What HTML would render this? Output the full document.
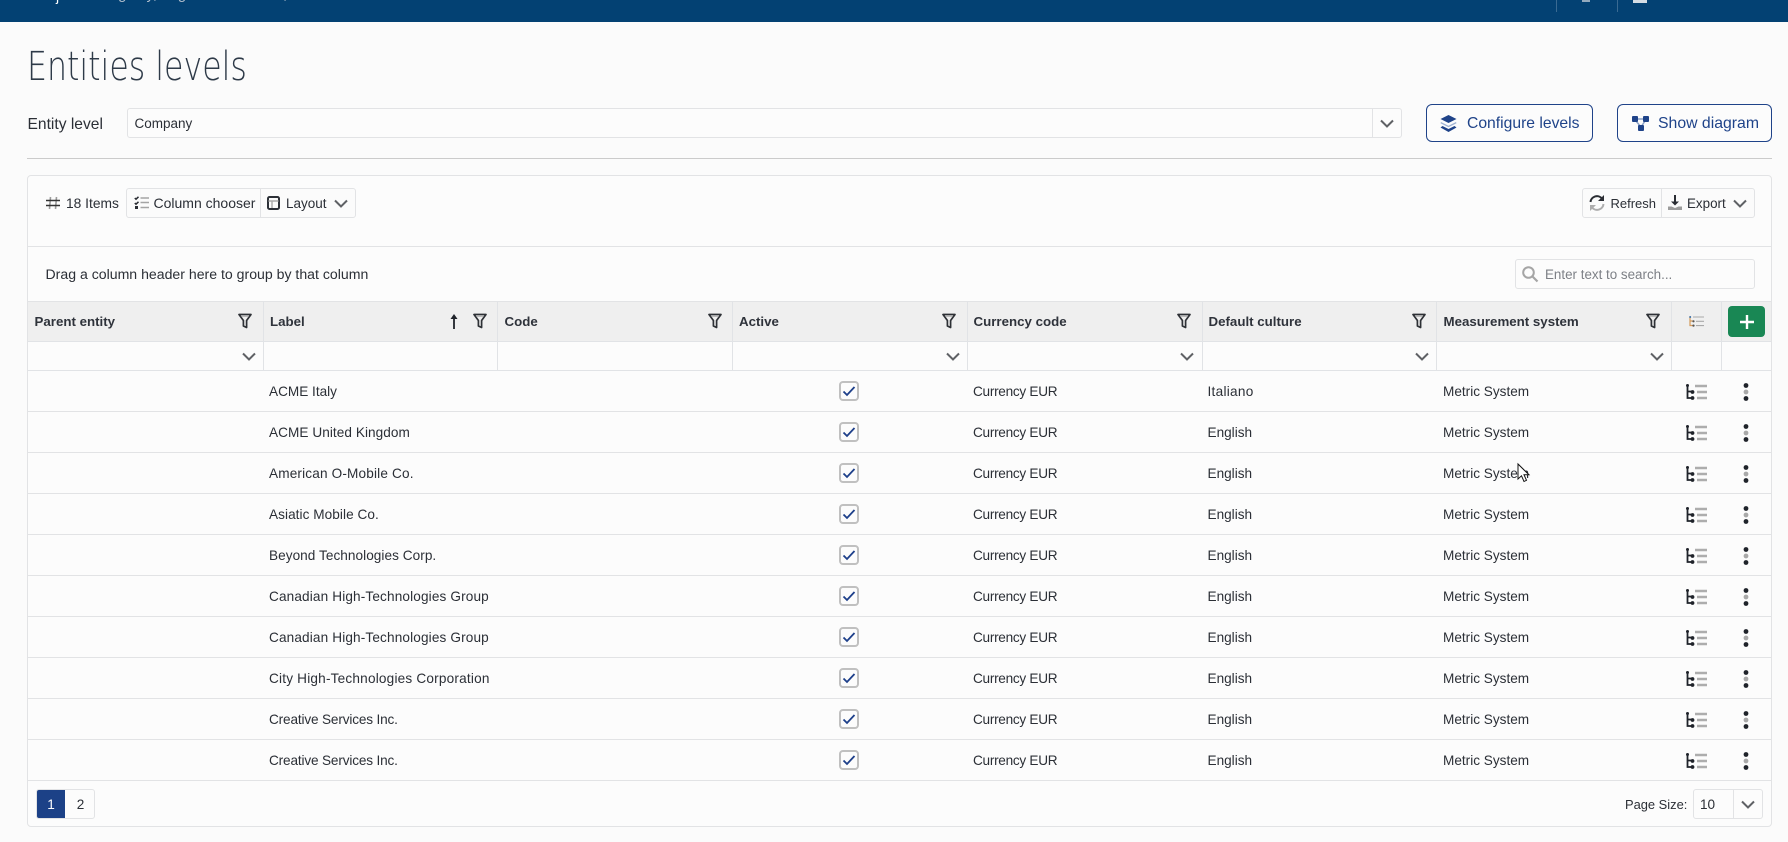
<!DOCTYPE html>
<html lang="en"><head><meta charset="utf-8"><title>Entities levels</title>
<style>
*{box-sizing:border-box}
html,body{margin:0;padding:0;width:1788px;height:842px;overflow:hidden;background:#fbfbfb;font-family:"Liberation Sans",sans-serif;font-size:13.6px;color:#2b2f36}
.a{position:absolute;white-space:nowrap}
svg{display:block;overflow:visible}
.t{line-height:20px;height:20px}
.b{border:1px solid #e2e3e5;border-radius:3px}
.v{position:absolute;width:1px;background:#e2e3e5}
.hd{font-weight:bold;color:#2f333b;font-size:13.3px;line-height:20px;height:20px;top:312px}
.col{position:absolute;top:301px;width:1px;height:70px;background:#e1e3e6}
.row{position:absolute;left:28px;width:1743px;height:41px;border-bottom:1px solid #e2e3e5}
.row .a{line-height:20px;height:20px;top:11px}
.c1{left:241px}.c2{left:945px;letter-spacing:-.28px}.c3{left:1179.5px}.c4{left:1415px}
.row .cb{left:811px;top:10px;width:20px;height:20px;border:2px solid #c0c0c0;border-radius:4px}
.row .tr{left:1658px;top:11px}
.row .dt{left:1715px;top:11px}
</style></head><body>
<svg width="0" height="0" style="position:absolute">
<defs>
<symbol id="fil" viewBox="0 0 14 16"><path d="M1 1.5h12L8.6 7.5V14.5L5.4 13V7.5Z" fill="none" stroke="#2e3136" stroke-width="1.7" stroke-linejoin="round"/><path d="M3.5 3.5h7" stroke="#bbb" stroke-width="1"/></symbol>
<symbol id="chev" viewBox="0 0 14 9"><path d="M1 1.5 7 7.5 13 1.5" fill="none" stroke="#5f6165" stroke-width="2"/></symbol>
<symbol id="tree" viewBox="0 0 21 16"><path d="M1.5 1v13h5M1.5 7.5h5" fill="none" stroke="#1f232a" stroke-width="1.8"/><circle cx="1.5" cy="1.5" r="1.5" fill="#1f232a"/><circle cx="6.5" cy="8" r="1.9" fill="#1f232a"/><circle cx="6.5" cy="14" r="1.9" fill="#1f232a"/><path d="M9 2h12M11 8h10M11 14h10" stroke="#adadad" stroke-width="2.6"/></symbol>
<symbol id="dots" viewBox="0 0 6 18"><circle cx="3" cy="2.5" r="2.4" fill="#1f232a"/><circle cx="3" cy="9" r="2.4" fill="#a9a9a9"/><circle cx="3" cy="15.5" r="2.4" fill="#1f232a"/></symbol>
<symbol id="chk" viewBox="0 0 16 16"><path d="M2.5 8.5 6 12 13.5 4" fill="none" stroke="#1d3f8a" stroke-width="1.8"/></symbol>
</defs></svg>

<!-- top bar -->
<div class="a" style="left:0;top:0;width:1788px;height:22px;background:#034173;overflow:hidden">
  <div class="a" style="left:56px;top:-12px;color:#fff;font-size:14px;line-height:16px">j</div>
  <div class="a" style="left:99px;top:-13px;color:#aebccb;font-size:15px;line-height:16px">Registry, Organization</div>
  <div class="a" style="left:283px;top:-13px;color:#aebccb;font-size:15px;line-height:16px">,</div>
  <div class="a" style="left:1556px;top:0;width:1px;height:12px;background:#3a6a92"></div>
  <div class="a" style="left:1617px;top:0;width:1px;height:12px;background:#3a6a92"></div>
  <div class="a" style="left:1582px;top:0;width:8px;height:2px;background:#93a9bd"></div>
  <div class="a" style="left:1633px;top:0;width:14px;height:3px;background:#d5dde5"></div>
</div>

<!-- title -->
<div class="a" style="left:27px;top:43px;font-family:'DejaVu Sans','Liberation Sans',sans-serif;font-weight:200;font-size:40px;line-height:48px;color:#2e3a48;transform-origin:0 0;transform:scaleX(.79)">Entities levels</div>

<!-- entity level -->
<div class="a t" style="left:27.5px;top:115px;font-size:15.6px">Entity level</div>
<div class="a b" style="left:127px;top:108px;width:1275px;height:30px;background:#fcfcfc"></div>
<div class="a t" style="left:134.5px;top:114px;font-size:13.5px">Company</div>
<div class="v" style="left:1372px;top:109px;height:28px"></div>
<svg class="a" style="left:1380px;top:119px" width="14" height="9"><use href="#chev"/></svg>

<!-- top buttons -->
<div class="a" style="left:1426px;top:104px;width:167px;height:38px;border:1.5px solid #1f4389;border-radius:6px;background:#fcfcfc"></div>
<svg class="a" style="left:1440px;top:115px" width="17" height="17" viewBox="0 0 17 17"><path d="M8.5 0 16.5 4 8.5 8 .5 4Z" fill="#1f4389"/><path d="M1 7 8.5 10.7 16 7 16.5 8.3 8.5 12.3 .5 8.3Z" fill="#9fb2d3"/><path d="M2.5 11 8.5 14 14.5 11 16.5 12.5 8.5 17 .5 12.5Z" fill="#1f4389"/></svg>
<div class="a t" style="left:1467px;top:114px;font-size:15.7px;color:#1f4389">Configure levels</div>
<div class="a" style="left:1617px;top:104px;width:155px;height:38px;border:1.5px solid #1f4389;border-radius:6px;background:#fcfcfc"></div>
<svg class="a" style="left:1632px;top:116px" width="17" height="15" viewBox="0 0 17 15"><path d="M3 3h11M4 5l5 6M13 5l-4 6" stroke="#8aa0c6" stroke-width="1.5" fill="none"/><rect x="0" y="0" width="6" height="6" rx="1" fill="#1f4389"/><rect x="11" y="0" width="6" height="6" rx="1" fill="#1f4389"/><rect x="6" y="9" width="6" height="6" rx="1" fill="#1f4389"/></svg>
<div class="a t" style="left:1658px;top:114px;font-size:15.8px;color:#1f4389">Show diagram</div>

<div class="a" style="left:27px;top:158px;width:1745px;height:1px;background:#cbcbcb"></div>

<!-- card -->
<div class="a" style="left:27px;top:175px;width:1745px;height:652px;border:1px solid #e2e3e5;border-radius:4px;background:#fcfcfc"></div>

<!-- toolbar -->
<svg class="a" style="left:46px;top:196px" width="14" height="14" viewBox="0 0 14 14"><path d="M4.5 1 3.5 13M10.5 1 9.5 13" stroke="#9a9a9a" stroke-width="1.6"/><path d="M0 4.5h14M0 9.5h14" stroke="#333" stroke-width="1.6"/></svg>
<div class="a t" style="left:66px;top:194px;font-size:13.8px">18 Items</div>
<div class="a b" style="left:126px;top:188px;width:230px;height:30px;background:#fbfbfb"></div>
<div class="v" style="left:260px;top:189px;height:28px"></div>
<svg class="a" style="left:134px;top:196px" width="15" height="13" viewBox="0 0 15 13"><path d="M.8 2 2 3.2 4.5.8M.8 7 2 8.2 4.5 5.8" fill="none" stroke="#2a2d33" stroke-width="1.5"/><rect x="1" y="10" width="3" height="3" fill="#2a2d33"/><path d="M6.5 2h8.5M6.5 6.5h8.5M6.5 11.5h8.5" stroke="#a4a4a4" stroke-width="1.5"/></svg>
<div class="a t" style="left:153.5px;top:193px;font-size:14px">Column chooser</div>
<svg class="a" style="left:267px;top:196px" width="13" height="14" viewBox="0 0 13 14"><rect x="1" y="1" width="11" height="12" rx="1.5" fill="none" stroke="#2d3138" stroke-width="2"/><path d="M1.5 5h10M5 5v7" stroke="#a9a9a9" stroke-width="1.4"/></svg>
<div class="a t" style="left:286px;top:194px;font-size:13.5px">Layout</div>
<svg class="a" style="left:334px;top:199px" width="14" height="9"><use href="#chev"/></svg>

<div class="a b" style="left:1582px;top:188px;width:173px;height:30px;background:#fbfbfb"></div>
<div class="v" style="left:1661px;top:189px;height:28px"></div>
<svg class="a" style="left:1589px;top:195px" width="16" height="16" viewBox="0 0 16 16"><path d="M1.5 7A6.5 6.5 0 0 1 13 3.5" fill="none" stroke="#2a2d33" stroke-width="2"/><path d="M15 0V6H9Z" fill="#2a2d33"/><path d="M14.5 9A6.5 6.5 0 0 1 3 12.5" fill="none" stroke="#adadad" stroke-width="2"/><path d="M1 16V10H7Z" fill="#adadad"/></svg>
<div class="a t" style="left:1610.5px;top:194px;font-size:13px">Refresh</div>
<svg class="a" style="left:1668px;top:195px" width="14" height="15" viewBox="0 0 14 15"><path d="M7 0V8" stroke="#2a2d33" stroke-width="2"/><path d="M3 6.5H11L7 10.5Z" fill="#2a2d33"/><path d="M0 15V11.5H3.5L7 13 10.5 11.5H14V15Z" fill="#9c9c9c"/></svg>
<div class="a t" style="left:1687px;top:194px;font-size:13.4px">Export</div>
<svg class="a" style="left:1733px;top:199px" width="14" height="9"><use href="#chev"/></svg>

<div class="a" style="left:28px;top:246px;width:1743px;height:1px;background:#e2e3e5"></div>
<div class="a t" style="left:45.5px;top:264px;font-size:14.1px">Drag a column header here to group by that column</div>
<div class="a b" style="left:1515px;top:259px;width:240px;height:30px;background:#fcfcfc"></div>
<svg class="a" style="left:1522px;top:266px" width="16" height="16" viewBox="0 0 16 16"><circle cx="6.5" cy="6.5" r="5.3" fill="none" stroke="#a5a5a5" stroke-width="2"/><path d="M10.5 10.5 15.5 15.5" stroke="#a5a5a5" stroke-width="2.2"/></svg>
<div class="a t" style="left:1545px;top:265px;font-size:13.4px;color:#7d8086">Enter text to search...</div>

<!-- header -->
<div class="a" style="left:28px;top:301px;width:1743px;height:41px;background:#efefef;border-top:1px solid #e2e3e5;border-bottom:1px solid #e1e3e6"></div>
<div class="a" style="left:28px;top:370px;width:1743px;height:1px;background:#e1e3e6"></div>
<div class="col" style="left:263px"></div><div class="col" style="left:497px"></div><div class="col" style="left:732px"></div><div class="col" style="left:967px"></div><div class="col" style="left:1202px"></div><div class="col" style="left:1436px"></div><div class="col" style="left:1671px"></div><div class="col" style="left:1721px"></div>

<div class="a hd" style="left:34.5px">Parent entity</div>
<div class="a hd" style="left:270px">Label</div>
<div class="a hd" style="left:504.5px">Code</div>
<div class="a hd" style="left:739px">Active</div>
<div class="a hd" style="left:973.5px">Currency code</div>
<div class="a hd" style="left:1208.5px">Default culture</div>
<div class="a hd" style="left:1443.5px">Measurement system</div>

<svg class="a" style="left:238px;top:313px" width="14" height="16"><use href="#fil"/></svg>
<svg class="a" style="left:473px;top:313px" width="14" height="16"><use href="#fil"/></svg>
<svg class="a" style="left:708px;top:313px" width="14" height="16"><use href="#fil"/></svg>
<svg class="a" style="left:942px;top:313px" width="14" height="16"><use href="#fil"/></svg>
<svg class="a" style="left:1177px;top:313px" width="14" height="16"><use href="#fil"/></svg>
<svg class="a" style="left:1412px;top:313px" width="14" height="16"><use href="#fil"/></svg>
<svg class="a" style="left:1646px;top:313px" width="14" height="16"><use href="#fil"/></svg>
<svg class="a" style="left:450px;top:314px" width="8" height="15" viewBox="0 0 8 15"><path d="M4 2V15" stroke="#1f232a" stroke-width="1.8"/><path d="M.5 5 4 0 7.5 5Z" fill="#1f232a"/></svg>

<svg class="a" style="left:1689px;top:316px" width="15" height="11" viewBox="0 0 15 11"><path d="M1 .5v9h4M1 5h4" fill="none" stroke="#d49a5a" stroke-width="1.2"/><circle cx="1.2" cy="1" r="1" fill="#3b6ea5"/><circle cx="4.5" cy="5.3" r="1.1" fill="#555"/><circle cx="4.5" cy="9.6" r="1.1" fill="#555"/><path d="M4 1h11M7 5.3h8M7 9.6h8" stroke="#a9a9a9" stroke-width="1.1"/></svg>
<div class="a" style="left:1728px;top:306px;width:37px;height:31px;background:#198754;border-radius:4px"></div>
<svg class="a" style="left:1739.5px;top:314.5px" width="14" height="14" viewBox="0 0 14 14"><path d="M7 0V14M0 7H14" stroke="#fff" stroke-width="2.4"/></svg>

<svg class="a" style="left:242px;top:352px" width="14" height="9"><use href="#chev"/></svg>
<svg class="a" style="left:946px;top:352px" width="14" height="9"><use href="#chev"/></svg>
<svg class="a" style="left:1180px;top:352px" width="14" height="9"><use href="#chev"/></svg>
<svg class="a" style="left:1415px;top:352px" width="14" height="9"><use href="#chev"/></svg>
<svg class="a" style="left:1650px;top:352px" width="14" height="9"><use href="#chev"/></svg>

<!-- rows -->
<div class="row" style="top:371px"><div class="a c1">ACME Italy</div><div class="a cb"><svg width="16" height="16"><use href="#chk"/></svg></div><div class="a c2">Currency EUR</div><div class="a c3" style="letter-spacing:.28px">Italiano</div><div class="a c4">Metric System</div><svg class="a tr" width="21" height="16"><use href="#tree"/></svg><svg class="a dt" width="6" height="18"><use href="#dots"/></svg></div>
<div class="row" style="top:412px"><div class="a c1" style="letter-spacing:.06px">ACME United Kingdom</div><div class="a cb"><svg width="16" height="16"><use href="#chk"/></svg></div><div class="a c2">Currency EUR</div><div class="a c3">English</div><div class="a c4">Metric System</div><svg class="a tr" width="21" height="16"><use href="#tree"/></svg><svg class="a dt" width="6" height="18"><use href="#dots"/></svg></div>
<div class="row" style="top:453px"><div class="a c1" style="letter-spacing:.16px">American O-Mobile Co.</div><div class="a cb"><svg width="16" height="16"><use href="#chk"/></svg></div><div class="a c2">Currency EUR</div><div class="a c3">English</div><div class="a c4">Metric System</div><svg class="a tr" width="21" height="16"><use href="#tree"/></svg><svg class="a dt" width="6" height="18"><use href="#dots"/></svg></div>
<div class="row" style="top:494px"><div class="a c1" style="letter-spacing:.06px">Asiatic Mobile Co.</div><div class="a cb"><svg width="16" height="16"><use href="#chk"/></svg></div><div class="a c2">Currency EUR</div><div class="a c3">English</div><div class="a c4">Metric System</div><svg class="a tr" width="21" height="16"><use href="#tree"/></svg><svg class="a dt" width="6" height="18"><use href="#dots"/></svg></div>
<div class="row" style="top:535px"><div class="a c1" style="letter-spacing:.05px">Beyond Technologies Corp.</div><div class="a cb"><svg width="16" height="16"><use href="#chk"/></svg></div><div class="a c2">Currency EUR</div><div class="a c3">English</div><div class="a c4">Metric System</div><svg class="a tr" width="21" height="16"><use href="#tree"/></svg><svg class="a dt" width="6" height="18"><use href="#dots"/></svg></div>
<div class="row" style="top:576px"><div class="a c1" style="letter-spacing:.14px">Canadian High-Technologies Group</div><div class="a cb"><svg width="16" height="16"><use href="#chk"/></svg></div><div class="a c2">Currency EUR</div><div class="a c3">English</div><div class="a c4">Metric System</div><svg class="a tr" width="21" height="16"><use href="#tree"/></svg><svg class="a dt" width="6" height="18"><use href="#dots"/></svg></div>
<div class="row" style="top:617px"><div class="a c1" style="letter-spacing:.14px">Canadian High-Technologies Group</div><div class="a cb"><svg width="16" height="16"><use href="#chk"/></svg></div><div class="a c2">Currency EUR</div><div class="a c3">English</div><div class="a c4">Metric System</div><svg class="a tr" width="21" height="16"><use href="#tree"/></svg><svg class="a dt" width="6" height="18"><use href="#dots"/></svg></div>
<div class="row" style="top:658px"><div class="a c1" style="letter-spacing:.2px">City High-Technologies Corporation</div><div class="a cb"><svg width="16" height="16"><use href="#chk"/></svg></div><div class="a c2">Currency EUR</div><div class="a c3">English</div><div class="a c4">Metric System</div><svg class="a tr" width="21" height="16"><use href="#tree"/></svg><svg class="a dt" width="6" height="18"><use href="#dots"/></svg></div>
<div class="row" style="top:699px"><div class="a c1" style="letter-spacing:-.155px">Creative Services Inc.</div><div class="a cb"><svg width="16" height="16"><use href="#chk"/></svg></div><div class="a c2">Currency EUR</div><div class="a c3">English</div><div class="a c4">Metric System</div><svg class="a tr" width="21" height="16"><use href="#tree"/></svg><svg class="a dt" width="6" height="18"><use href="#dots"/></svg></div>
<div class="row" style="top:740px"><div class="a c1" style="letter-spacing:-.155px">Creative Services Inc.</div><div class="a cb"><svg width="16" height="16"><use href="#chk"/></svg></div><div class="a c2">Currency EUR</div><div class="a c3">English</div><div class="a c4">Metric System</div><svg class="a tr" width="21" height="16"><use href="#tree"/></svg><svg class="a dt" width="6" height="18"><use href="#dots"/></svg></div>

<!-- pager -->
<div class="a b" style="left:36px;top:789px;width:59px;height:30px"></div>
<div class="a" style="left:37px;top:790px;width:28px;height:28px;background:#1c4187;border-radius:2px 0 0 2px;color:#fff;text-align:center;line-height:29px;font-size:13.6px">1</div>
<div class="a" style="left:66px;top:790px;width:29px;height:28px;text-align:center;line-height:29px;font-size:13.6px">2</div>
<div class="a t" style="left:1625px;top:795px;font-size:12.9px">Page Size:</div>
<div class="a b" style="left:1693px;top:789px;width:70px;height:30px"></div>
<div class="v" style="left:1733px;top:790px;height:28px"></div>
<div class="a t" style="left:1700px;top:795px;font-size:13.6px">10</div>
<svg class="a" style="left:1741px;top:800px" width="14" height="9"><use href="#chev"/></svg>

<!-- cursor -->
<svg class="a" style="left:1517px;top:463px" width="14" height="20" viewBox="0 0 14 20"><path d="M1 1V16L4.5 12.8 7 18.5 9.5 17.3 7 11.8H12Z" fill="#fff" stroke="#111" stroke-width="1"/></svg>
</body></html>
